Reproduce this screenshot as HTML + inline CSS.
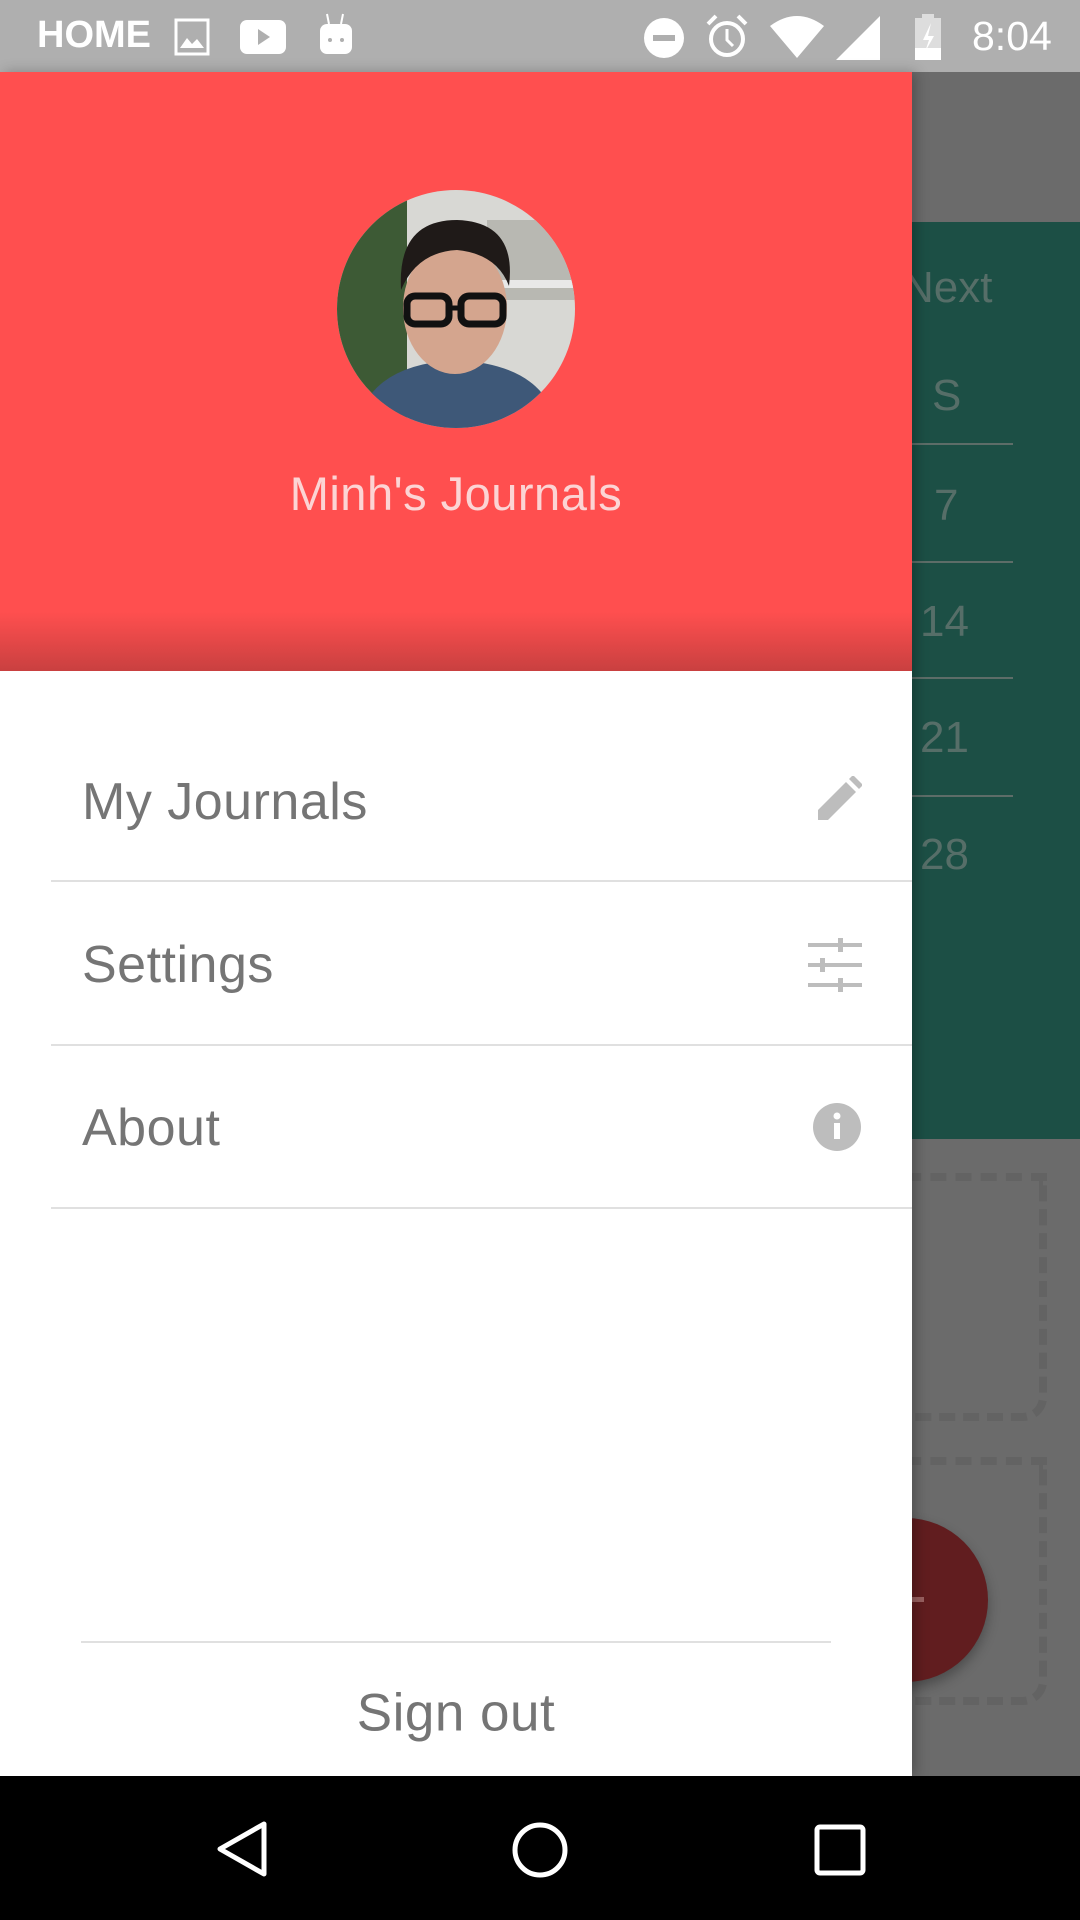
<!DOCTYPE html>
<html><head><meta charset="utf-8"><style>
*{margin:0;padding:0;box-sizing:border-box}
body{width:1080px;height:1920px;position:relative;overflow:hidden;background:#6b6b6b;font-family:"Liberation Sans",Roboto,sans-serif}
.abs{position:absolute}
.sb{left:0;top:0;width:1080px;height:72px;background:#afafaf;color:#fff}
.teal{left:912px;top:222px;width:168px;height:917px;background:#1c4f45}
.tt{color:#566e68;font-size:44px;position:absolute;transform:translateY(-50%)}
.ln{position:absolute;left:912px;width:101px;height:2px;background:#5d6d68}
.drawer{left:0;top:72px;width:912px;height:1704px;background:#fff}
.hdr{left:0;top:72px;width:912px;height:599px;background:#ff4f4f}
.item{position:absolute;left:82px;font-size:52px;color:#757575;transform:translateY(-50%);letter-spacing:0.5px}
.div{position:absolute;left:51px;width:861px;height:2px;background:#e0e0e0}
.nav{left:0;top:1776px;width:1080px;height:144px;background:#000}
</style></head><body>
<div class="abs sb">
<div class="abs" style="left:37px;top:14px;font-size:38px;font-weight:bold;letter-spacing:0px">HOME</div>
<svg class="abs" style="left:174px;top:18px" width="40" height="38"><rect x="2" y="2" width="32" height="34" fill="none" stroke="#fff" stroke-width="3"/><path d="M6 30 L13 20 L18 26 L23 21 L30 30Z" fill="#fff"/></svg>
<svg class="abs" style="left:240px;top:20px" width="48" height="36"><rect x="0" y="0" width="46" height="34" rx="7" fill="#fff"/><path d="M18 9 L30 17 L18 25Z" fill="#afafaf"/></svg>
<svg class="abs" style="left:318px;top:12px" width="36" height="44"><path d="M9 2 L11 12 M25 2 L23 12" stroke="#fff" stroke-width="2"/><rect x="2" y="12" width="32" height="30" rx="7" fill="#fff"/><circle cx="12" cy="28" r="2" fill="#afafaf"/><circle cx="24" cy="28" r="2" fill="#afafaf"/></svg>
<svg class="abs" style="left:642px;top:16px" width="44" height="44"><circle cx="22" cy="22" r="20" fill="#fff"/><rect x="11" y="19" width="22" height="6" fill="#afafaf"/></svg>
<svg class="abs" style="left:704px;top:12px" width="46" height="48"><circle cx="23" cy="27" r="16" fill="none" stroke="#fff" stroke-width="4"/><path d="M23 17 V28 L29 34" stroke="#fff" stroke-width="3" fill="none"/><path d="M4 12 L12 4 M42 12 L34 4" stroke="#fff" stroke-width="4"/></svg>
<svg class="abs" style="left:768px;top:14px" width="58" height="46"><path d="M2 12 Q29 -8 56 12 L29 44Z" fill="#fff"/></svg>
<svg class="abs" style="left:834px;top:14px" width="48" height="46"><path d="M46 2 V46 H2Z" fill="#fff"/></svg>
<svg class="abs" style="left:912px;top:14px" width="32" height="46"><rect x="10" y="0" width="12" height="5" fill="#ddd"/><rect x="3" y="4" width="26" height="42" fill="#ddd"/><rect x="3" y="34" width="26" height="12" fill="#fff"/><path d="M19 9 L11 26 H17 L13 38 L22 22 H16Z" fill="#fff"/></svg>
<div class="abs" style="left:972px;top:13px;font-size:41px">8:04</div>
</div>
<div class="abs teal"></div>
<div class="tt" style="left:902px;top:288px">Next</div>
<div class="tt" style="left:932px;top:396px">S</div>
<div class="ln" style="top:443px"></div><div class="tt" style="left:934px;top:506px">7</div>
<div class="ln" style="top:561px"></div><div class="tt" style="left:920px;top:622px">14</div>
<div class="ln" style="top:677px"></div><div class="tt" style="left:920px;top:738px">21</div>
<div class="ln" style="top:795px"></div><div class="tt" style="left:920px;top:855px">28</div>
<div class="abs" style="left:880px;top:1173px;width:167px;height:248px;border:8px dashed #636363;border-radius:0 0 24px 0"></div>
<div class="abs" style="left:880px;top:1457px;width:167px;height:248px;border:8px dashed #636363;border-radius:0 0 24px 0"></div>
<div class="abs" style="left:824px;top:1518px;width:164px;height:164px;border-radius:50%;background:#611d1f;box-shadow:0 6px 12px rgba(0,0,0,.3)"></div>
<div class="abs" style="left:912px;top:1597px;width:12px;height:5px;background:#9a6060"></div>
<div class="abs drawer" style="box-shadow:4px 0 12px rgba(0,0,0,.25)"></div>
<div class="abs hdr"></div>
<div class="abs" style="left:0;top:612px;width:912px;height:59px;background:linear-gradient(#ff4f4f,#c94040)"></div>
<svg class="abs" style="left:337px;top:190px" width="238" height="238">
<defs><clipPath id="c"><circle cx="119" cy="119" r="119"/></clipPath></defs>
<g clip-path="url(#c)">
<rect width="238" height="238" fill="#d8d8d4"/>
<rect x="0" y="0" width="70" height="238" fill="#3d5a35"/>
<rect x="150" y="30" width="88" height="80" fill="#b8b8b2"/>
<rect x="160" y="90" width="78" height="8" fill="#e8e8e8"/>
<path d="M20 238 Q30 175 119 170 Q210 175 220 238Z" fill="#3e5878"/>
<ellipse cx="118" cy="118" rx="52" ry="66" fill="#d4a58e"/>
<path d="M64 100 Q60 30 120 30 Q180 32 172 96 Q160 64 120 60 Q80 62 64 100Z" fill="#1f1a18"/>
<rect x="70" y="106" width="42" height="28" rx="8" fill="none" stroke="#111" stroke-width="7"/>
<rect x="124" y="106" width="42" height="28" rx="8" fill="none" stroke="#111" stroke-width="7"/>
<path d="M112 118 H124" stroke="#111" stroke-width="5"/>
</g></svg>
<div class="abs" style="left:0;width:912px;top:466px;text-align:center;font-size:47px;color:#fcd4d4;letter-spacing:0.5px">Minh's Journals</div>
<div class="item" style="top:802px">My Journals</div>
<svg class="abs" style="left:814px;top:776px" width="48" height="48"><path d="M4 44 V34 L32 6 L42 16 L14 44Z" fill="#bdbdbd"/><path d="M35 3 L39 -1 L49 9 L45 13Z" fill="#bdbdbd"/></svg>
<div class="div" style="top:880px"></div>
<div class="item" style="top:965px">Settings</div>
<svg class="abs" style="left:806px;top:938px" width="56" height="54" fill="#bdbdbd"><rect x="2" y="5" width="54" height="4"/><rect x="2" y="25" width="54" height="4"/><rect x="2" y="45" width="54" height="4"/><rect x="32" y="0" width="5" height="14"/><rect x="14" y="20" width="5" height="14"/><rect x="32" y="40" width="5" height="14"/></svg>
<div class="div" style="top:1044px"></div>
<div class="item" style="top:1128px">About</div>
<svg class="abs" style="left:812px;top:1102px" width="50" height="50"><circle cx="25" cy="25" r="24" fill="#bdbdbd"/><rect x="22" y="21" width="6" height="16" fill="#fff"/><circle cx="25" cy="14" r="3.5" fill="#fff"/></svg>
<div class="div" style="top:1207px"></div>
<div class="abs" style="left:81px;top:1641px;width:750px;height:2px;background:#e0e0e0"></div>
<div class="abs" style="left:0;width:912px;top:1713px;transform:translateY(-50%);text-align:center;font-size:53px;color:#757575;letter-spacing:0.5px">Sign out</div>
<div class="abs nav"></div>
<svg class="abs" style="left:214px;top:1820px" width="54" height="58"><path d="M50 4 L50 54 L6 29Z" fill="none" stroke="#fff" stroke-width="5" stroke-linejoin="round"/></svg>
<svg class="abs" style="left:510px;top:1820px" width="60" height="60"><circle cx="30" cy="30" r="25" fill="none" stroke="#fff" stroke-width="5"/></svg>
<svg class="abs" style="left:814px;top:1824px" width="52" height="52"><rect x="3" y="3" width="46" height="46" rx="3" fill="none" stroke="#fff" stroke-width="5"/></svg>
</body></html>
